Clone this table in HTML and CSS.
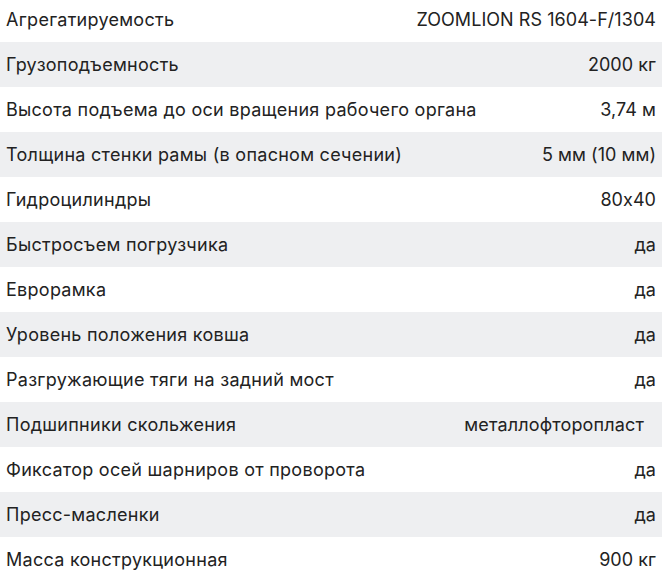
FILE: index.html
```html
<!DOCTYPE html>
<html lang="ru"><head><meta charset="utf-8"><title>Характеристики</title><link rel="stylesheet" href="styles.css"></head>
<body>
<div class="specs">
  <div class="row"><span class="name">Агрегатируемость</span><span class="val">ZOOMLION RS 1604-F/1304</span></div>
  <div class="row alt"><span class="name">Грузоподъемность</span><span class="val">2000 кг</span></div>
  <div class="row"><span class="name">Высота подъема до оси вращения рабочего органа</span><span class="val">3,74 м</span></div>
  <div class="row alt"><span class="name">Толщина стенки рамы (в опасном сечении)</span><span class="val">5 мм (10 мм)</span></div>
  <div class="row"><span class="name">Гидроцилиндры</span><span class="val">80x40</span></div>
  <div class="row alt"><span class="name">Быстросъем погрузчика</span><span class="val">да</span></div>
  <div class="row"><span class="name">Еврорамка</span><span class="val">да</span></div>
  <div class="row alt"><span class="name">Уровень положения ковша</span><span class="val">да</span></div>
  <div class="row"><span class="name">Разгружающие тяги на задний мост</span><span class="val">да</span></div>
  <div class="row alt"><span class="name">Подшипники скольжения</span><span class="val val-inset">металлофторопласт</span></div>
  <div class="row"><span class="name">Фиксатор осей шарниров от проворота</span><span class="val">да</span></div>
  <div class="row alt"><span class="name">Пресс-масленки</span><span class="val">да</span></div>
  <div class="row"><span class="name">Масса конструкционная</span><span class="val">900 кг</span></div>
</div>
</body></html>
```
FILE: styles.css
```css
html,body{margin:0;padding:0;background:#fff;}
body{font-family:Inter,"Noto Sans",sans-serif;font-size:18px;color:#222;}
.specs{display:flex;flex-direction:column;margin-top:-3px;}
.row{display:flex;justify-content:space-between;align-items:center;height:45px;padding:0 6px 0 6px;background:#fff;}
.row.alt{background:#eeeff1;}
.name{white-space:nowrap;letter-spacing:0.27px;}
.val{white-space:nowrap;text-align:right;letter-spacing:0.05px;}
.val-inset{margin-right:12px;letter-spacing:0.15px;}
```
